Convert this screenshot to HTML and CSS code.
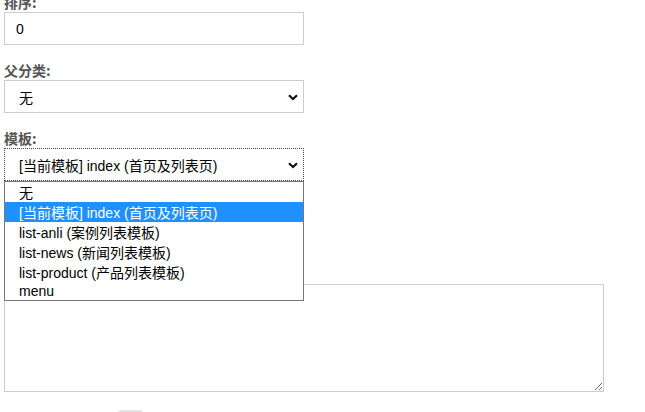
FILE: index.html
```html
<!DOCTYPE html>
<html lang="zh-CN">
<head>
<meta charset="utf-8">
<link rel="stylesheet" href="styles.css">
</head>
<body>
<form class="form">
  <div class="field first">
    <label class="lbl">排序:</label>
    <input class="ctl" type="text" value="0">
  </div>
  <div class="field">
    <label class="lbl">父分类:</label>
    <div class="sel-wrap">
      <div class="ctl sel"><span>无</span></div>
      <svg class="chev" width="10" height="7" viewBox="0 0 10 7"><path d="M1 1.2 L5 5 L9 1.2" fill="none" stroke="#111" stroke-width="2.2"/></svg>
    </div>
  </div>
  <div class="field">
    <label class="lbl">模板:</label>
    <div class="sel-wrap">
      <div class="ctl sel focus"><span>[当前模板] index (首页及列表页)</span></div>
      <svg class="chev" width="10" height="7" viewBox="0 0 10 7"><path d="M1 1.2 L5 5 L9 1.2" fill="none" stroke="#111" stroke-width="2.2"/></svg>
      <ul class="dropdown">
        <li>无</li>
        <li class="on">[当前模板] index (首页及列表页)</li>
        <li>list-anli (案例列表模板)</li>
        <li>list-news (新闻列表模板)</li>
        <li>list-product (产品列表模板)</li>
        <li>menu</li>
      </ul>
    </div>
  </div>
  <div class="field">
    <div class="lbl blank"></div>
    <div class="ctl sel"></div>
  </div>
  <div class="field">
    <div class="lbl blank"></div>
    <textarea class="area"></textarea>
  </div>
  <div class="actions">
    <button class="btn" type="button"></button>
  </div>
</form>
</body>
</html>
```
FILE: styles.css
```css
html, body {
  margin: 0;
  padding: 0;
  background: #fff;
  overflow: hidden;
}
.form {
  padding: 0 4px;
  margin-top: -7px;
  font-family: "Liberation Sans", "Noto Sans CJK SC", sans-serif;
}
.field {
  margin-top: 16px;
}
.field.first {
  margin-top: 0;
}
.lbl {
  display: block;
  font-family: "Noto Sans CJK SC", "Liberation Sans", sans-serif;
  font-size: 14px;
  line-height: 18px;
  font-weight: bold;
  color: #555;
  margin-bottom: 1px;
}
.lbl.blank {
  height: 18px;
}
.ctl {
  display: block;
  box-sizing: border-box;
  width: 300px;
  height: 33px;
  margin: 0;
  border: 1px solid #ccc;
  padding: 0 11px;
  font-family: "Liberation Sans", "Noto Sans CJK SC", sans-serif;
  font-size: 14px;
  color: #000;
  background: #fff;
  outline: none;
}
.sel {
  display: flex;
  align-items: center;
  padding-left: 14px;
}
.sel.focus {
  border: 1px dotted #444;
}
.sel-wrap {
  position: relative;
  width: 300px;
}
.chev {
  position: absolute;
  right: 6px;
  top: 14px;
}
.dropdown {
  position: absolute;
  left: 0;
  top: 33px;
  z-index: 5;
  box-sizing: border-box;
  width: 300px;
  height: 120px;
  margin: 0;
  padding: 0;
  list-style: none;
  border: 1px solid #777;
  background: #fff;
  display: flex;
  flex-direction: column;
}
.dropdown li {
  flex: 1;
  display: flex;
  align-items: center;
  padding-left: 14px;
  font-size: 14px;
  color: #000;
  white-space: nowrap;
}
.dropdown li.on {
  background: #1e90ff;
  color: #fff;
}
.area {
  display: block;
  box-sizing: border-box;
  width: 600px;
  height: 108px;
  margin: 0;
  border: 1px solid #ccc;
  padding: 6px;
  font-family: "Liberation Sans", sans-serif;
  font-size: 14px;
}
.actions {
  margin-top: 18px;
  padding-left: 113px;
}
.btn {
  display: block;
  width: 27px;
  height: 30px;
  border: none;
  border-radius: 5px;
  background: #e4e4e4;
  padding: 0;
}
```
